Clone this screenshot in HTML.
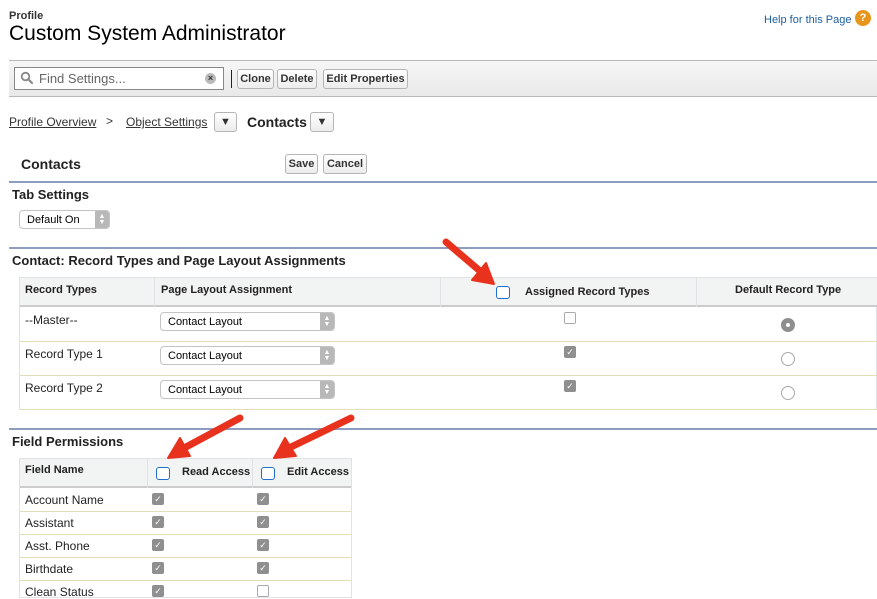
<!DOCTYPE html>
<html><head><style>
*{margin:0;padding:0;box-sizing:border-box}
body{width:877px;height:596px;overflow:hidden;background:#fff;font-family:"Liberation Sans",Arial,sans-serif;color:#000;position:relative}
.a{position:absolute}
.btn{position:absolute;border:1px solid #b5b5b5;border-radius:3px;background:linear-gradient(#fff,#ececec);font-size:11px;font-weight:bold;color:#333;text-align:center;line-height:18px;height:20px}
.line{position:absolute;left:9px;right:0;height:2px;background:#8e9dbf}
.h{font-weight:bold;font-size:13px;color:#222}
.sel{position:absolute;border:1px solid #c4c4c4;border-radius:4px;background:#fff;font-size:11px;line-height:18px;padding-left:7px;height:19px}
.sel i{position:absolute;right:0;top:0;width:14px;height:17px;background:#b8b8b8;border-radius:0 3px 3px 0;color:#fff;font-style:normal;font-size:7px;line-height:6px;text-align:center;padding-top:3px}
.cb{position:absolute;width:12px;height:12px;border:1px solid #aaa;border-radius:2px;background:#fff}
.cc{position:absolute;width:12px;height:12px;border-radius:2px;background:#8f8f8f;color:#fff;font-size:9px;line-height:12px;text-align:center}
.bx{position:absolute;width:14px;height:13px;border:1.5px solid #1f6ed1;border-radius:3px;background:#fff}
.rd{position:absolute;width:14px;height:14px;border:1px solid #aaa;border-radius:50%;background:#fff}
.t{position:absolute;font-size:12px;color:#222}
.th{position:absolute;font-size:11px;font-weight:bold;color:#222}
</style></head><body>
<div class="a" style="left:9px;top:10px;font-size:11px;font-weight:bold;color:#333">Profile</div>
<div class="a" style="left:9px;top:22px;font-size:21px;color:#000">Custom System Administrator</div>
<div class="a" style="left:764px;top:14px;font-size:11px;color:#1b5e9e">Help for this Page</div>
<div class="a" style="left:855px;top:10px;width:16px;height:16px;border-radius:50%;background:#e8951b;color:#fff;font-size:11px;font-weight:bold;text-align:center;line-height:16px">?</div>

<div class="a" style="left:9px;top:60px;width:868px;height:37px;border-top:1px solid #b8b8b8;border-bottom:1px solid #b8b8b8;background:linear-gradient(#f6f6f6,#e9e9e9)"></div>
<div class="a" style="left:14px;top:67px;width:210px;height:23px;border:1px solid #888;background:#fff"></div>
<svg class="a" style="left:20px;top:71px" width="14" height="14"><circle cx="5.5" cy="5.5" r="3.8" fill="none" stroke="#888" stroke-width="1.8"/><line x1="8.5" y1="8.5" x2="12" y2="12" stroke="#888" stroke-width="2.2" stroke-linecap="round"/></svg>
<div class="a" style="left:39px;top:71px;font-size:13px;color:#666">Find Settings...</div>
<div class="a" style="left:205px;top:73px;width:11px;height:11px;border-radius:50%;background:#bbb;color:#333;font-size:9px;line-height:11px;text-align:center;font-weight:bold">×</div>
<div class="a" style="left:231px;top:70px;width:1px;height:18px;background:#222"></div>
<div class="btn" style="left:237px;top:69px;width:37px">Clone</div>
<div class="btn" style="left:277px;top:69px;width:40px">Delete</div>
<div class="btn" style="left:323px;top:69px;width:85px">Edit Properties</div>

<div class="a" style="left:9px;top:115px;font-size:12px;color:#333;text-decoration:underline">Profile Overview</div>
<div class="a" style="left:106px;top:114px;font-size:12px;color:#333">&gt;</div>
<div class="a" style="left:126px;top:115px;font-size:12px;color:#333;text-decoration:underline">Object Settings</div>
<div class="btn" style="left:214px;top:112px;width:23px;font-size:11px">&#9660;</div>
<div class="a" style="left:247px;top:114px;font-size:14px;font-weight:bold;color:#222">Contacts</div>
<div class="btn" style="left:310px;top:112px;width:24px;font-size:11px">&#9660;</div>

<div class="a h" style="left:21px;top:156px;font-size:14px">Contacts</div>
<div class="btn" style="left:285px;top:154px;width:33px">Save</div>
<div class="btn" style="left:323px;top:154px;width:44px">Cancel</div>
<div class="line" style="top:181px"></div>
<div class="a h" style="left:12px;top:187px">Tab Settings</div>
<div class="sel" style="left:19px;top:210px;width:91px">Default On<i>▲<br>▼</i></div>

<div class="line" style="top:247px"></div>
<div class="a h" style="left:12px;top:253px">Contact: Record Types and Page Layout Assignments</div>
<div class="a" style="left:19px;top:277px;width:858px;height:133px;border:1px solid #e0e3e5"></div>
<div class="a" style="left:20px;top:278px;width:857px;height:29px;background:#f2f3f3;border-bottom:2px solid #ccc"></div>
<div class="a" style="left:154px;top:278px;width:1px;height:29px;background:#e0e3e5"></div>
<div class="a" style="left:440px;top:278px;width:1px;height:29px;background:#e0e3e5"></div>
<div class="a" style="left:696px;top:278px;width:1px;height:29px;background:#e0e3e5"></div>
<div class="th" style="left:25px;top:284px">Record Types</div>
<div class="th" style="left:161px;top:284px">Page Layout Assignment</div>
<div class="bx" style="left:496px;top:286px"></div>
<div class="th" style="left:525px;top:286px">Assigned Record Types</div>
<div class="th" style="left:735px;top:284px">Default Record Type</div>
<div class="a" style="left:20px;top:341px;width:857px;height:1px;background:#e3deb8"></div>
<div class="a" style="left:20px;top:375px;width:857px;height:1px;background:#e3deb8"></div>
<div class="a" style="left:20px;top:409px;width:857px;height:1px;background:#e3deb8"></div>
<div class="t" style="left:25px;top:313px">--Master--</div>
<div class="t" style="left:25px;top:347px">Record Type 1</div>
<div class="t" style="left:25px;top:381px">Record Type 2</div>
<div class="sel" style="left:160px;top:312px;width:175px">Contact Layout<i>▲<br>▼</i></div>
<div class="sel" style="left:160px;top:346px;width:175px">Contact Layout<i>▲<br>▼</i></div>
<div class="sel" style="left:160px;top:380px;width:175px">Contact Layout<i>▲<br>▼</i></div>
<div class="cb" style="left:564px;top:312px"></div>
<div class="cc" style="left:564px;top:346px">✓</div>
<div class="cc" style="left:564px;top:380px">✓</div>
<div class="rd" style="left:781px;top:318px;background:#8f8f8f;border-color:#8f8f8f"></div>
<div class="a" style="left:786px;top:323px;width:4px;height:4px;border-radius:50%;background:#fff"></div>
<div class="rd" style="left:781px;top:352px"></div>
<div class="rd" style="left:781px;top:386px"></div>

<div class="line" style="top:428px"></div>
<div class="a h" style="left:12px;top:434px">Field Permissions</div>
<div class="a" style="left:19px;top:458px;width:333px;height:140px;border:1px solid #e0e3e5"></div>
<div class="a" style="left:20px;top:459px;width:331px;height:29px;background:#f2f3f3;border-bottom:2px solid #ccc"></div>
<div class="a" style="left:147px;top:459px;width:1px;height:29px;background:#e0e3e5"></div>
<div class="a" style="left:252px;top:459px;width:1px;height:29px;background:#e0e3e5"></div>
<div class="th" style="left:25px;top:464px">Field Name</div>
<div class="bx" style="left:156px;top:467px"></div>
<div class="th" style="left:182px;top:466px">Read Access</div>
<div class="bx" style="left:261px;top:467px"></div>
<div class="th" style="left:287px;top:466px">Edit Access</div>
<div class="a" style="left:20px;top:511px;width:331px;height:1px;background:#e3deb8"></div>
<div class="a" style="left:20px;top:534px;width:331px;height:1px;background:#e3deb8"></div>
<div class="a" style="left:20px;top:557px;width:331px;height:1px;background:#e3deb8"></div>
<div class="a" style="left:20px;top:580px;width:331px;height:1px;background:#e3deb8"></div>
<div class="t" style="left:25px;top:493px">Account Name</div>
<div class="t" style="left:25px;top:516px">Assistant</div>
<div class="t" style="left:25px;top:539px">Asst. Phone</div>
<div class="t" style="left:25px;top:562px">Birthdate</div>
<div class="t" style="left:25px;top:585px">Clean Status</div>
<div class="cc" style="left:152px;top:493px">✓</div><div class="cc" style="left:257px;top:493px">✓</div>
<div class="cc" style="left:152px;top:516px">✓</div><div class="cc" style="left:257px;top:516px">✓</div>
<div class="cc" style="left:152px;top:539px">✓</div><div class="cc" style="left:257px;top:539px">✓</div>
<div class="cc" style="left:152px;top:562px">✓</div><div class="cc" style="left:257px;top:562px">✓</div>
<div class="cc" style="left:152px;top:585px">✓</div><div class="cb" style="left:257px;top:585px"></div>

<svg class="a" style="left:0;top:0" width="877" height="596">
<g fill="#e8321e" stroke="#e8321e" stroke-linecap="round">
<line x1="446" y1="242" x2="480" y2="271" stroke-width="7"/>
<polygon points="494,284 472,280 486,263" stroke-width="2" stroke-linejoin="round"/>
<line x1="240" y1="418" x2="186" y2="447" stroke-width="7"/>
<polygon points="168,458 180,438 190,456" stroke-width="2" stroke-linejoin="round"/>
<line x1="351" y1="418" x2="291" y2="447" stroke-width="7"/>
<polygon points="274,458 285,438 296,456" stroke-width="2" stroke-linejoin="round"/>
</g></svg>
</body></html>
